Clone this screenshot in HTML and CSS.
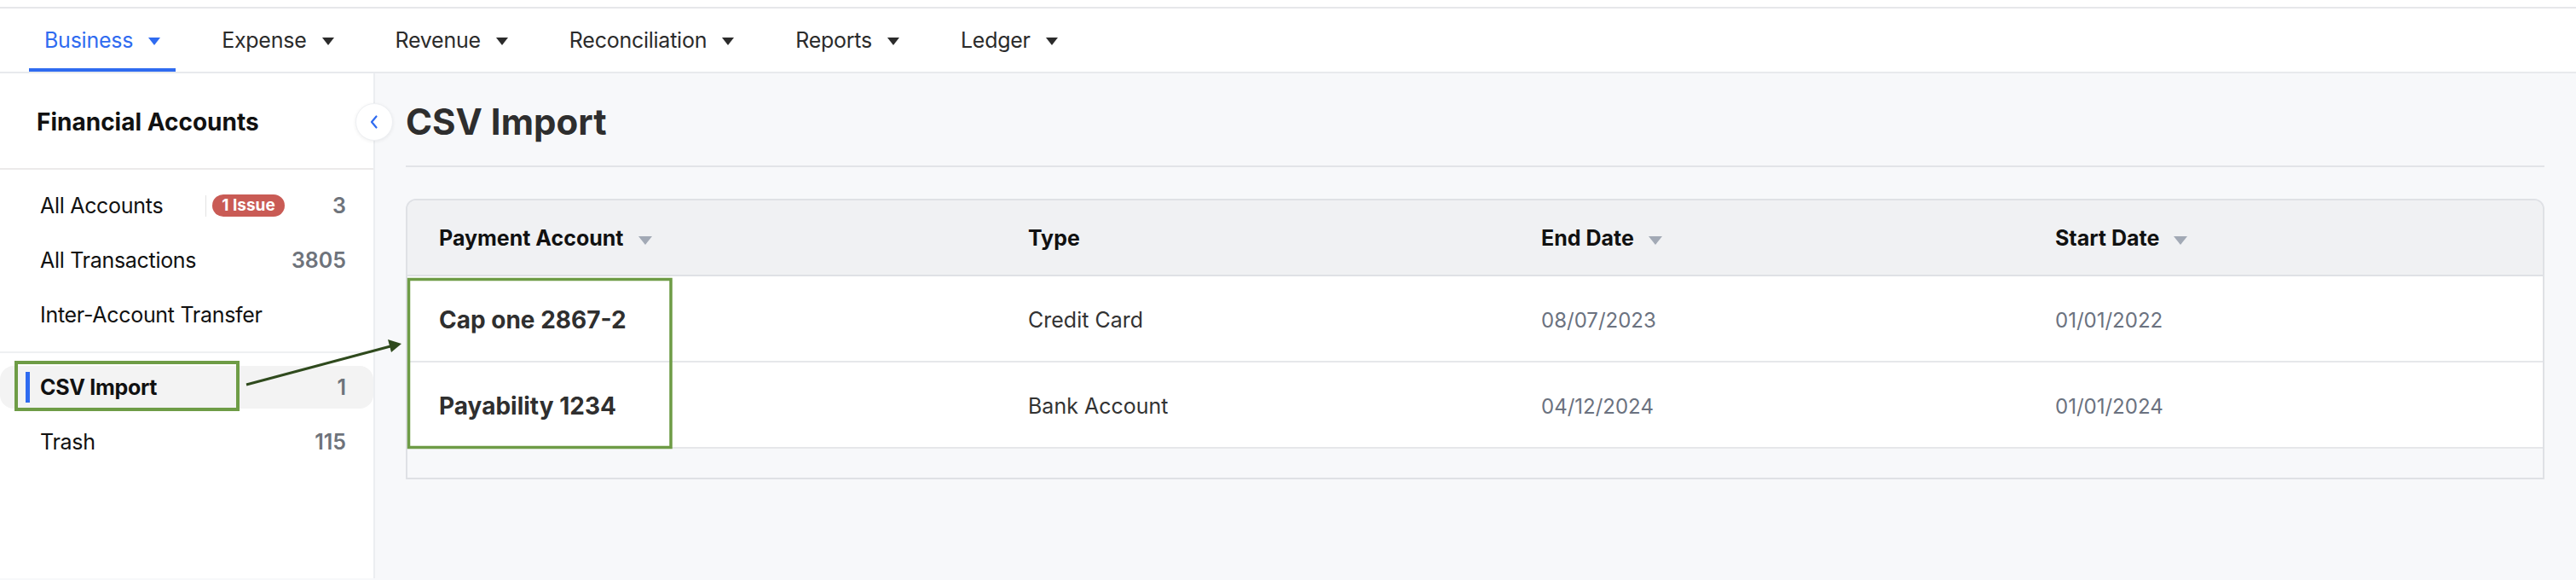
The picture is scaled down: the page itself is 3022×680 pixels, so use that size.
FILE: index.html
```html
<!DOCTYPE html>
<html lang="en">
<head>
<meta charset="utf-8">
<title>CSV Import</title>
<link rel="stylesheet" href="styles.css">
</head>
<body>
<div class="page">
  <div class="topline"></div>
  <nav class="nav">
    <a class="tab active"><span>Business</span><i class="caret"></i></a>
    <a class="tab"><span>Expense</span><i class="caret"></i></a>
    <a class="tab"><span>Revenue</span><i class="caret"></i></a>
    <a class="tab"><span>Reconciliation</span><i class="caret"></i></a>
    <a class="tab"><span>Reports</span><i class="caret"></i></a>
    <a class="tab"><span>Ledger</span><i class="caret"></i></a>
  </nav>
  <div class="layout">
    <aside class="sidebar">
      <div class="side-head">
        <h2>Financial Accounts</h2>
        <button class="collapse" aria-label="Collapse">
          <svg width="12" height="18" viewBox="0 0 12 18"><path d="M8.5 2.5 L3 9 L8.5 15.5" fill="none" stroke="#2f6bf0" stroke-width="2.2" stroke-linecap="round" stroke-linejoin="round"/></svg>
        </button>
      </div>
      <ul class="side-list">
        <li class="item"><span class="label fixed">All Accounts</span><span class="vsep"></span><span class="badge">1 Issue</span><span class="spacer"></span><span class="count">3</span></li>
        <li class="item"><span class="label">All Transactions</span><span class="count">3805</span></li>
        <li class="item"><span class="label">Inter-Account Transfer</span></li>
        <li class="divider"></li>
        <li class="item selected"><span class="label">CSV Import</span><span class="count">1</span></li>
        <li class="item"><span class="label">Trash</span><span class="count">115</span></li>
      </ul>
    </aside>
    <main class="main">
      <h1 class="title">CSV Import</h1>
      <div class="table">
        <div class="thead">
          <div class="th">Payment Account<i class="sort"></i></div>
          <div class="th">Type</div>
          <div class="th">End Date<i class="sort"></i></div>
          <div class="th">Start Date<i class="sort"></i></div>
        </div>
        <div class="tr">
          <div class="td name">Cap one 2867-2</div>
          <div class="td">Credit Card</div>
          <div class="td date">08/07/2023</div>
          <div class="td date">01/01/2022</div>
        </div>
        <div class="tr">
          <div class="td name">Payability 1234</div>
          <div class="td">Bank Account</div>
          <div class="td date">04/12/2024</div>
          <div class="td date">01/01/2024</div>
        </div>
        <div class="tfoot"></div>
      </div>
    </main>
  </div>
  <svg class="annot" width="3022" height="680" viewBox="0 0 3022 680">
    <rect x="19" y="425" width="260" height="55" fill="none" stroke="#6e9c46" stroke-width="4"/>
    <rect x="479.5" y="327.5" width="307.5" height="197" fill="none" stroke="#6e9c46" stroke-width="3.5"/>
    <line x1="289" y1="451" x2="458" y2="406" stroke="#2f4a1d" stroke-width="3"/>
    <polygon points="471,403 455,398 459,413" fill="#2f4a1d"/>
  </svg>
</div>
</body>
</html>
```
FILE: styles.css
```css
* { box-sizing: border-box; }
html, body { margin: 0; padding: 0; }
body {
  width: 3022px;
  height: 680px;
  overflow: hidden;
  background: #f7f8fa;
  font-family: Inter, "Noto Sans", "Liberation Sans", sans-serif;
  color: #222;
}
.page { position: relative; width: 3022px; height: 680px; }
.topline { height: 10px; background: #fff; border-bottom: 2px solid #e6e7ea; }
.nav {
  height: 76px;
  background: #fff;
  border-bottom: 2px solid #e8eaed;
  display: flex;
  align-items: stretch;
  padding-left: 34px;
  gap: 36px;
}
.tab {
  display: flex;
  align-items: center;
  gap: 18px;
  padding: 0 18px;
  font-size: 25px;
  letter-spacing: -0.25px;
  color: #2b2b2b;
  border-bottom: 4px solid transparent;
  padding-top: 4px;
}
.tab.active { color: #2f6bf0; border-bottom-color: #2f6bf0; }
.caret {
  width: 0; height: 0;
  border-left: 7px solid transparent;
  border-right: 7px solid transparent;
  border-top: 9px solid #2b2b2b;
  margin-top: 2px;
}
.tab.active .caret { border-top-color: #2f6bf0; }

.layout { display: flex; height: 592px; }
.sidebar {
  width: 440px;
  flex: none;
  background: #fff;
  border-right: 2px solid #eceef1;
}
.side-head {
  position: relative;
  height: 113px;
  border-bottom: 2px solid #eceaea;
  display: flex;
  align-items: center;
  padding-left: 43px;
  padding-top: 2px;
}
.side-head h2 { margin: 0; font-size: 28px; font-weight: 700; color: #111; letter-spacing: 0; }
.collapse {
  position: absolute;
  right: -23px;
  top: 35px;
  width: 44px;
  height: 44px;
  border-radius: 50%;
  border: 1px solid #eef0f3;
  background: #fff;
  box-shadow: 0 1px 4px rgba(0,0,0,0.07);
  display: flex;
  align-items: center;
  justify-content: center;
  padding: 0;
  z-index: 2;
}
.side-list { list-style: none; margin: 0; padding: 10px 0 0; }
.item {
  position: relative;
  height: 64px;
  display: flex;
  align-items: center;
  padding: 0 32px 0 47px;
  font-size: 25px;
  letter-spacing: -0.3px;
  color: #111;
}
.item .label { flex: 1; }
.item .label.fixed { flex: none; width: 194px; }
.spacer { flex: 1; }
.vsep { width: 1px; height: 25px; background: #e3e3e3; margin-right: 7px; }
.badge {
  background: #c95b55;
  color: #fff;
  font-size: 19px;
  font-weight: 700;
  letter-spacing: 0;
  width: 85px;
  text-align: center;
  height: 26px;
  line-height: 26px;
  border-radius: 13px;
}
.count { color: #6e737b; font-weight: 600; letter-spacing: 0; }
.divider { height: 2px; background: #eef0f2; margin: 11px 0 8px; }
.item.selected .label { font-weight: 700; }
.item.selected::before {
  content: "";
  position: absolute;
  left: 0; right: 0; top: 7px; bottom: 7px;
  background: #f3f3f3;
  border-radius: 16px;
  z-index: 0;
}
.item.selected::after {
  content: "";
  position: absolute;
  left: 30px; top: 14px;
  width: 5px; height: 36px;
  background: #2f6bf0;
}
.item > * { position: relative; z-index: 1; }

.main { flex: 1; padding: 0 37px 0 36px; }
.title {
  margin: 0;
  height: 110px;
  display: flex;
  align-items: center;
  padding-top: 4px;
  font-size: 42px;
  font-weight: 700;
  color: #2e2e2e;
  border-bottom: 2px solid #e2e4e8;
}
.table {
  margin-top: 37px;
  border: 2px solid #dfe1e5;
  border-radius: 12px 12px 0 0;
  overflow: hidden;
  background: #f7f8fa;
}
.thead, .tr {
  display: grid;
  grid-template-columns: 691px 602px 603px 1fr;
}
.thead { height: 89px; background: #f0f1f3; border-bottom: 2px solid #dfe1e5; }
.th {
  display: flex;
  align-items: center;
  padding-left: 37px;
  font-size: 25px;
  font-weight: 700;
  color: #111;
}
.sort {
  width: 0; height: 0;
  border-left: 8px solid transparent;
  border-right: 8px solid transparent;
  border-top: 10px solid #a2a9b5;
  margin-left: 17px;
  margin-top: 6px;
}
.tr { height: 101px; background: #fff; border-bottom: 2px solid #e6e7ea; }
.tr:last-of-type { border-bottom: none; }
.td {
  display: flex;
  align-items: center;
  padding-left: 37px;
  padding-top: 3px;
  font-size: 25px;
  color: #333;
}
.td.name { font-size: 28px; font-weight: 700; color: #2f2f2f; }
.td.date { font-size: 24px; color: #6b7280; }
.tfoot { height: 34px; background: #f7f8fa; }

.annot { position: absolute; left: 0; top: 0; pointer-events: none; }
```
